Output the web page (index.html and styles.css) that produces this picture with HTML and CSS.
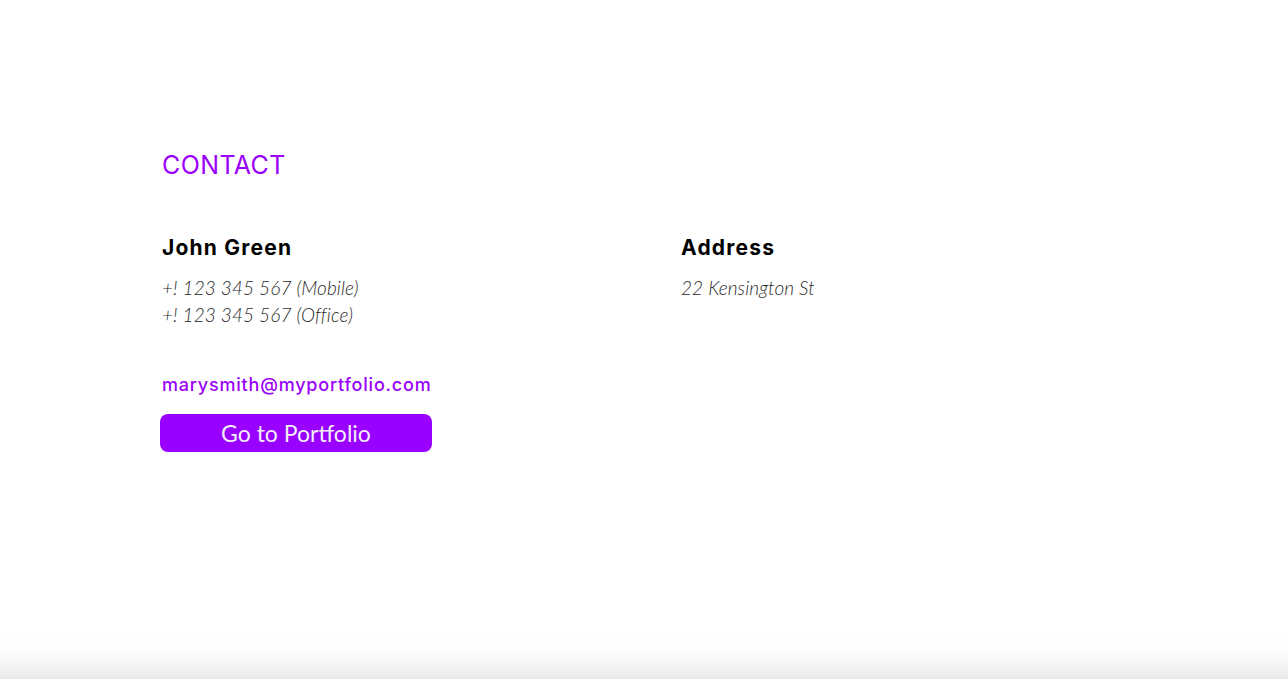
FILE: index.html
```html
<!DOCTYPE html>
<html lang="en">
<head>
  <meta charset="UTF-8">
  <title>Contact</title>
  <link rel="stylesheet" href="styles.css">
</head>
<body>

  <section class="contact">
    <h2 class="contact-title">CONTACT</h2>

    <div class="contact-grid">
      <div class="contact-col">
        <h3>John Green</h3>
        <p class="info">+! 123 345 567 (Mobile)<br>+! 123 345 567 (Office)</p>
        <a class="email" href="#">marysmith@myportfolio.com</a>
        <button class="portfolio-btn">Go to Portfolio</button>
      </div>
      <div class="contact-col">
        <h3>Address</h3>
        <p class="info">22 Kensington St</p>
      </div>
    </div>
  </section>

  <div class="page-fade"></div>

</body>
</html>
```

FILE: styles.css
```css
html, body {
  height: 100%;
}

body {
  margin: 0;
  font-family: 'Inter', sans-serif;
  background: #fff;
  color: #000;
  overflow: hidden;
}

.contact {
  padding: 150px 0 0 162px;
}

.contact-title {
  margin: 0;
  font-size: 25px;
  font-weight: 400;
  line-height: 30px;
  letter-spacing: 0.4px;
  color: #9b00fb;
}

.contact-grid {
  display: grid;
  grid-template-columns: 519px 400px;
  margin-top: 54px;
}

.contact-col h3 {
  margin: 0;
  font-size: 21px;
  font-weight: 700;
  line-height: 28px;
  letter-spacing: 1.2px;
}

.info {
  margin: 12px 0 0;
  font-family: 'Lato', sans-serif;
  font-size: 19px;
  font-weight: 300;
  font-style: italic;
  line-height: 27px;
  letter-spacing: 0.1px;
  color: #2a2a2a;
}

.email {
  display: block;
  margin-top: 45px;
  font-size: 18px;
  font-weight: 500;
  line-height: 24px;
  letter-spacing: 0.8px;
  color: #9b00fb;
  text-decoration: none;
}

.portfolio-btn {
  display: block;
  margin: 17px 0 0 -2px;
  width: 272px;
  height: 38px;
  background: #9900ff;
  border: none;
  border-radius: 8px;
  color: #f4eefa;
  font-family: 'Lato', sans-serif;
  font-size: 23px;
  cursor: pointer;
}

.page-fade {
  position: fixed;
  left: 0;
  right: 0;
  bottom: 0;
  height: 40px;
  background: linear-gradient(#fff, #fdfbfe 35%, #ebe9ec);
}
```
